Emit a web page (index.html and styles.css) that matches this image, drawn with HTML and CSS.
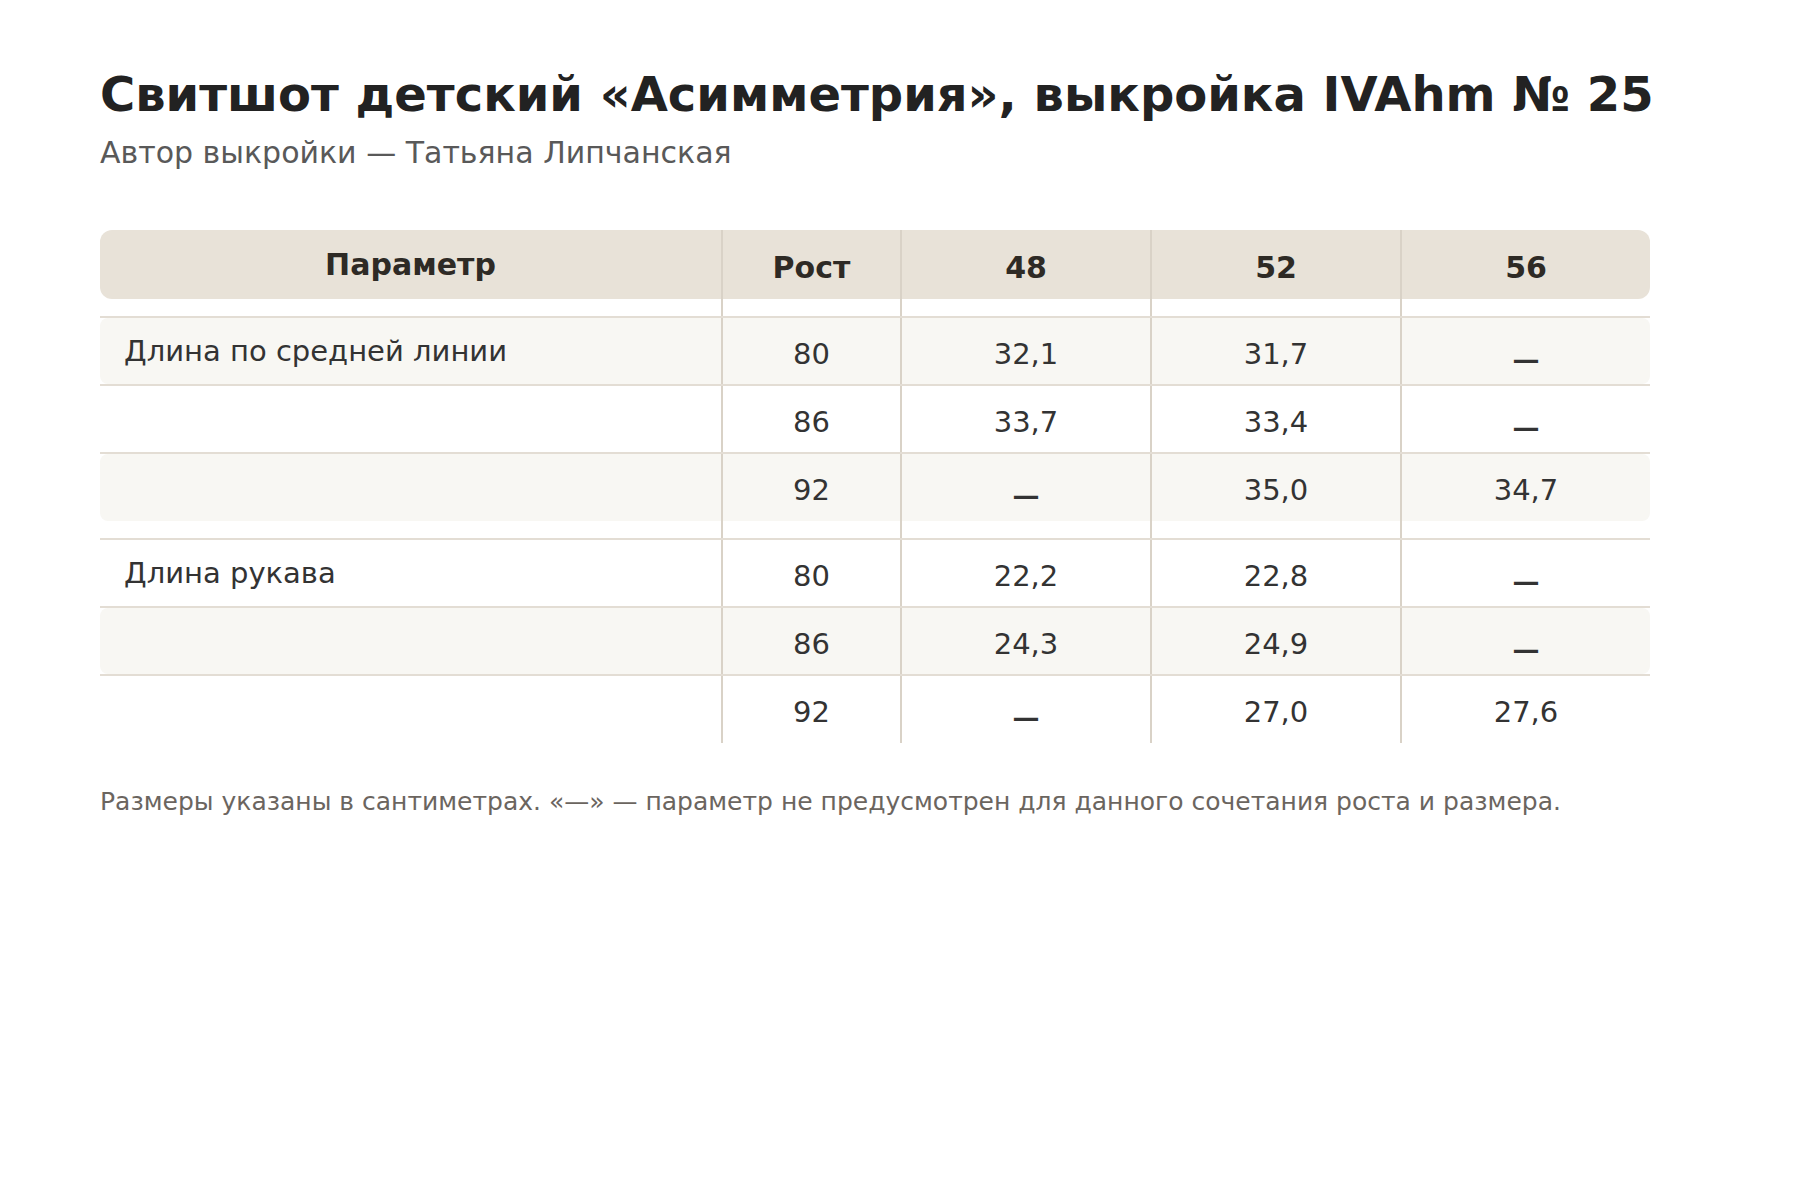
FILE: index.html
```html
<!DOCTYPE html>
<html lang="ru">
<head>
<meta charset="utf-8">
<title>Свитшот детский «Асимметрия», выкройка IVAhm № 25</title>
<link rel="stylesheet" href="styles.css">
</head>
<body>
<main class="page">
  <h1 class="title">Свитшот детский «Асимметрия», выкройка IVAhm № 25</h1>
  <p class="subtitle">Автор выкройки — Татьяна Липчанская</p>

  <div class="table" role="table">
    <div class="thead" role="row">
      <div class="cell first" role="columnheader">Параметр</div>
      <div class="cell" role="columnheader">Рост</div>
      <div class="cell" role="columnheader">48</div>
      <div class="cell" role="columnheader">52</div>
      <div class="cell" role="columnheader">56</div>
    </div>

    <div class="spacer"><span></span><span></span><span></span><span></span><span></span></div>

    <div class="group">
      <div class="row alt" role="row"><div class="cells">
        <div class="cell first">Длина по средней линии</div>
        <div class="cell">80</div>
        <div class="cell">32,1</div>
        <div class="cell">31,7</div>
        <div class="cell"><span class="na">—</span></div>
      </div></div>
      <div class="row" role="row"><div class="cells">
        <div class="cell first"></div>
        <div class="cell">86</div>
        <div class="cell">33,7</div>
        <div class="cell">33,4</div>
        <div class="cell"><span class="na">—</span></div>
      </div></div>
      <div class="row alt last" role="row"><div class="cells">
        <div class="cell first"></div>
        <div class="cell">92</div>
        <div class="cell"><span class="na">—</span></div>
        <div class="cell">35,0</div>
        <div class="cell">34,7</div>
      </div></div>
    </div>

    <div class="spacer"><span></span><span></span><span></span><span></span><span></span></div>

    <div class="group">
      <div class="row" role="row"><div class="cells">
        <div class="cell first">Длина рукава</div>
        <div class="cell">80</div>
        <div class="cell">22,2</div>
        <div class="cell">22,8</div>
        <div class="cell"><span class="na">—</span></div>
      </div></div>
      <div class="row alt" role="row"><div class="cells">
        <div class="cell first"></div>
        <div class="cell">86</div>
        <div class="cell">24,3</div>
        <div class="cell">24,9</div>
        <div class="cell"><span class="na">—</span></div>
      </div></div>
      <div class="row last" role="row"><div class="cells">
        <div class="cell first"></div>
        <div class="cell">92</div>
        <div class="cell"><span class="na">—</span></div>
        <div class="cell">27,0</div>
        <div class="cell">27,6</div>
      </div></div>
    </div>
  </div>

  <p class="note">Размеры указаны в сантиметрах. «—» — параметр не предусмотрен для данного сочетания роста и размера.</p>
</main>
</body>
</html>
```

FILE: styles.css
```css
* {
  box-sizing: border-box;
}

html, body {
  margin: 0;
  padding: 0;
  background: #ffffff;
}

body {
  font-family: "DejaVu Sans", "Noto Sans", sans-serif;
  color: #333333;
}

.page {
  padding: 66px 100px 40px;
}

.title {
  margin: 0;
  font-size: 48px;
  line-height: 1.2;
  font-weight: 700;
  color: #222222;
}

.subtitle {
  margin: 11px 0 0;
  font-size: 30px;
  line-height: 36px;
  color: #595959;
}

.table {
  margin-top: 59px;
  width: 1550px;
}

.thead,
.spacer,
.cells {
  display: grid;
  grid-template-columns: 621px 179px 250px 250px 250px;
}

.thead {
  height: 69px;
  background: #e8e2d8;
  border-radius: 12px;
}

.thead .cell {
  font-weight: 700;
  font-size: 30px;
  color: #2e2a25;
}

.thead .cell.first {
  justify-content: center;
  padding-left: 0;
}

.spacer {
  height: 17px;
}

.spacer span + span {
  border-left: 2px solid #d9d2c7;
}

.row {
  border-top: 2px solid #e3ddd4;
}

.cells {
  height: 66px;
  border-radius: 8px;
}

.row.last .cells {
  height: 67px;
}

.row.alt .cells {
  background: #f8f7f3;
}

.cell {
  display: flex;
  align-items: center;
  justify-content: center;
  padding-top: 6px;
  font-size: 29px;
  color: #333333;
  white-space: nowrap;
}

.cell + .cell {
  border-left: 2px solid #d9d2c7;
}

.cell.first {
  justify-content: flex-start;
  padding-top: 0;
  padding-left: 24px;
}

.na {
  font-weight: 700;
  font-size: 27px;
  margin-top: 11px;
}

.note {
  margin: 44px 0 0;
  font-size: 25px;
  line-height: 30px;
  color: #6b655f;
}
```
